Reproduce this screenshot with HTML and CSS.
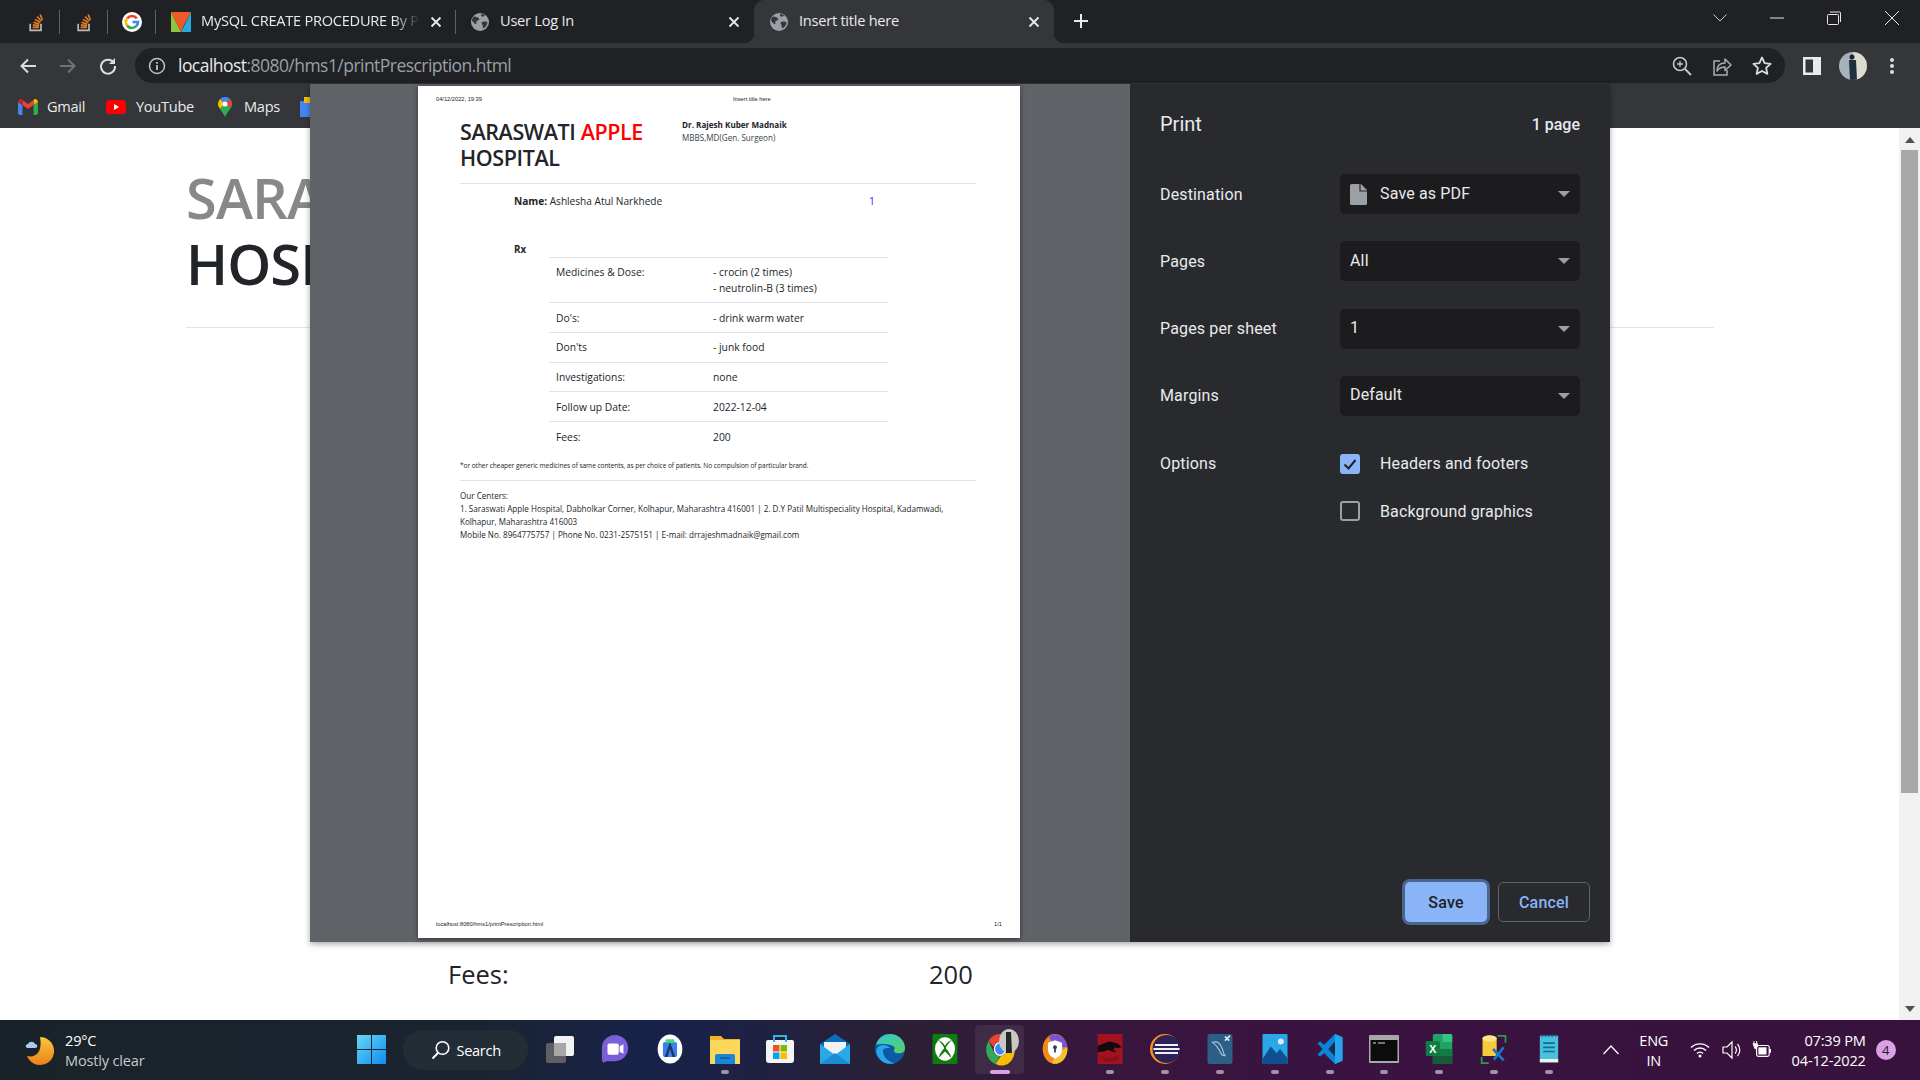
FILE: index.html
```html
<!DOCTYPE html>
<html lang="en">
<head>
<meta charset="utf-8">
<title>Insert title here</title>
<link rel="stylesheet" href="styles.css">
</head>
<body>
<svg class="defs" width="0" height="0" aria-hidden="true">
  <symbol id="so" viewBox="0 0 24 24"><path d="M5 14v8h13v-8" fill="none" stroke="#bcbbbb" stroke-width="2"/><path d="M8 18.500h7.500M8.200 15.500l7.400 1M9 12.300l7 2.500M10.800 8.800l6.200 4M13.500 5.300l4.600 5.700M17 3l2.700 6.800" fill="none" stroke="#e87a22" stroke-width="2"/></symbol>
  <symbol id="globe" viewBox="0 0 20 20"><circle cx="10" cy="10" r="9" fill="#9aa0a6"/><path d="M4 4.500c2 .3 4 .6 5 2s-1 2-2 2.500-1 1.500-.5 3c-2 .2-3.500-2-4.500-3.500C2 6.500 3 5.500 4 4.500zM12 10c2-1 4.500-.5 5.500.5-.5 3-2 5-4.500 6-.5-1.500 0-2.500-.5-3.500s-1.500-2-.5-3zM11 2c1.500 0 3 .5 4 1.500-1 1-2 1.500-3 1S11 3 11 2z" fill="#35363a"/></symbol>
  <symbol id="x" viewBox="0 0 12 12"><path d="M1.500 1.500l9 9M10.500 1.500l-9 9" stroke="#e8eaed" stroke-width="1.800" fill="none"/></symbol>
  <symbol id="caret" viewBox="0 0 12 6"><path d="M0 0h12L6 6z" fill="#9aa0a6"/></symbol>
</svg>

<header class="tabstrip">
  <div class="tab pin"><svg class="i20"><use href="#so"/></svg></div>
  <div class="tab pin"><svg class="i20"><use href="#so"/></svg></div>
  <div class="tab pin">
    <svg class="i20" viewBox="0 0 20 20"><circle cx="10" cy="10" r="10" fill="#fff"/><path d="M14.800 6.400A6 6 0 0 0 5.200 6.400" fill="none" stroke="#ea4335" stroke-width="2.600"/><path d="M5.200 6.400a6 6 0 0 0 0 7.200" fill="none" stroke="#fbbc05" stroke-width="2.600"/><path d="M5.200 13.600a6 6 0 0 0 9 .6" fill="none" stroke="#34a853" stroke-width="2.600"/><path d="M14.200 14.200A6 6 0 0 0 16 10h-5.500" fill="none" stroke="#4285f4" stroke-width="2.600"/></svg>
  </div>
  <div class="tab wide">
    <svg class="i20" viewBox="0 0 20 20"><path d="M0 0v20h10z" fill="#8cc63f"/><path d="M20 0v20H10z" fill="#27aae1"/><path d="M0 0h20l-7 13-3 7z" fill="#f05a28"/></svg>
    <span class="tab-title fade">MySQL CREATE PROCEDURE By P</span>
    <svg class="close"><use href="#x"/></svg>
  </div>
  <div class="tab wide second">
    <svg class="i20"><use href="#globe"/></svg>
    <span class="tab-title">User Log In</span>
    <svg class="close"><use href="#x"/></svg>
  </div>
  <div class="tab wide active">
    <svg class="i20"><use href="#globe"/></svg>
    <span class="tab-title">Insert title here</span>
    <svg class="close"><use href="#x"/></svg>
  </div>
  <svg class="newtab" viewBox="0 0 16 16"><path d="M8 1v14M1 8h14" stroke="#e8eaed" stroke-width="2"/></svg>
  <div class="winctl">
    <button class="wbtn"><svg class="i14" viewBox="0 0 14 14"><path d="M.5 3.500L7 10l6.500-6.500" fill="none" stroke="#c7c7c7" stroke-width="1"/></svg></button>
    <button class="wbtn"><svg class="i14" viewBox="0 0 14 14"><path d="M0 7h14" stroke="#e8e8e8" stroke-width="1"/></svg></button>
    <button class="wbtn"><svg class="i14" viewBox="0 0 14 14"><path d="M1.500 3.500h9a1 1 0 0 1 1 1v8a1 1 0 0 1-1 1h-9a1 1 0 0 1-1-1v-8a1 1 0 0 1 1-1zM3 1h9.500a1 1 0 0 1 1 1v9" fill="none" stroke="#e8e8e8"/></svg></button>
    <button class="wbtn wclose"><svg class="i14" viewBox="0 0 14 14"><path d="M0 0l14 14M14 0L0 14" stroke="#e8e8e8"/></svg></button>
  </div>
</header>

<nav class="toolbar">
  <button class="nav"><svg class="i18" viewBox="0 0 18 18"><path d="M17 9H3M9 2.500L2.500 9 9 15.500" fill="none" stroke="#dadce0" stroke-width="2"/></svg></button>
  <button class="nav"><svg class="i18" viewBox="0 0 18 18"><path d="M1 9h14M9 2.500L15.500 9 9 15.500" fill="none" stroke="#6f7276" stroke-width="2"/></svg></button>
  <button class="nav"><svg class="i18" viewBox="0 0 18 18"><path d="M15 6A7 7 0 1 0 16 9" fill="none" stroke="#dadce0" stroke-width="2"/><path d="M16 1v6h-6z" fill="#dadce0"/></svg></button>
  <div class="omnibox">
    <svg class="i18" viewBox="0 0 18 18"><circle cx="9" cy="9" r="7.500" fill="none" stroke="#bdc1c6" stroke-width="1.500"/><path d="M9 8v5M9 5v1.800" stroke="#bdc1c6" stroke-width="1.800"/></svg>
    <span class="url"><b>localhost</b>:8080/hms1/printPrescription.html</span>
    <span class="omni-actions">
      <svg class="i20" viewBox="0 0 20 20"><circle cx="8" cy="8" r="6.500" fill="none" stroke="#c4c7c9" stroke-width="1.600"/><path d="M13 13l6 6" stroke="#c4c7c9" stroke-width="2"/><path d="M8 5v6M5 8h6" stroke="#c4c7c9" stroke-width="1.300"/></svg>
      <svg class="i20" viewBox="0 0 20 20"><path d="M8 5H2v14h13v-5" fill="none" stroke="#a9acaf" stroke-width="1.500"/><path d="M5 15c0-6 4-8 8-8V3l6 6-6 5.500V11c-4 0-6 1-8 4z" fill="none" stroke="#a9acaf" stroke-width="1.500" stroke-linejoin="round"/></svg>
      <svg class="i20" viewBox="0 0 20 20"><path d="M10 1.500l2.600 5.600 6 .7-4.500 4.100 1.300 6L10 15l-5.400 2.900 1.300-6L1.400 7.800l6-.7z" fill="none" stroke="#dadce0" stroke-width="1.800" stroke-linejoin="round"/></svg>
    </span>
  </div>
  <svg class="panel" viewBox="0 0 18 18"><path d="M0 0h18v18H0zM2.500 2.500v13H10v-13z" fill="#e8eaed" fill-rule="evenodd"/></svg>
  <svg class="avatar" viewBox="0 0 28 28"><defs><clipPath id="av"><circle cx="14" cy="14" r="14"/></clipPath></defs><g clip-path="url(#av)"><path d="M0 0h14v28H0z" fill="#a5b1bd"/><path d="M14 0h14v28H14z" fill="#dcdccf"/><circle cx="13" cy="5" r="2.500" fill="#1d2429"/><path d="M10 8h7l1 20h-7z" fill="#20303d"/></g></svg>
  <svg class="dots" viewBox="0 0 14 18"><circle cx="7" cy="3" r="2" fill="#dadce0"/><circle cx="7" cy="9" r="2" fill="#dadce0"/><circle cx="7" cy="15" r="2" fill="#dadce0"/></svg>
</nav>

<nav class="bookmarks">
  <a class="bm bm-gmail"><svg class="i20" viewBox="0 0 20 16"><path d="M0 3v11a2 2 0 0 0 2 2h2.500V6z" fill="#4285f4"/><path d="M20 3v11a2 2 0 0 1-2 2h-2.500V6z" fill="#34a853"/><path d="M15.500 6V1l1-1C18 -.5 20 1 20 3l-4.500 3z" fill="#fbbc04"/><path d="M4.500 6L10 10l5.500-4V1L10 5 4.500 1z" fill="#ea4335"/><path d="M4.500 6V1l-1-1C2-.5 0 1 0 3z" fill="#c5221f"/></svg><span>Gmail</span></a>
  <a class="bm bm-yt"><svg class="i20" viewBox="0 0 20 14"><rect width="20" height="14" rx="3.500" fill="#f00"/><path d="M8 4l5 3-5 3z" fill="#fff"/></svg><span>YouTube</span></a>
  <a class="bm bm-maps"><svg class="pin-ico" viewBox="0 0 14 20"><path d="M7 20C5 15 0 11 0 7a7 7 0 0 1 14 0c0 4-5 8-7 13z" fill="#34a853"/><path d="M2 2.300A7 7 0 0 1 12 2L7 7z" fill="#4285f4"/><path d="M0 7a7 7 0 0 1 2-4.700L7 7l-5 4.500C1 10 0 8.500 0 7z" fill="#fbbc04"/><path d="M12 2a7 7 0 0 1 2 5c0 1-.4 2-1 3L7 7z" fill="#ea4335"/><circle cx="7" cy="7" r="2.500" fill="#fff"/></svg><span>Maps</span></a>
  <svg class="i20" viewBox="0 0 20 20"><rect y="4" width="20" height="16" fill="#4285f4"/><rect x="4" width="12" height="6" fill="#fbbc04"/></svg>
</nav>

<div class="viewport">
  <main class="page">
    <h1 class="hosp"><span class="hosp-gray">SARASWATI</span> <span class="hosp-red">APPLE</span><br>HOSPITAL</h1>
    <hr class="page-rule">
    <div class="fees-row"><span>Fees:</span><span>200</span></div>
  </main>
  <aside class="scrollbar">
    <svg class="sb-arrow" viewBox="0 0 10 6"><path d="M0 6h10L5 0z" fill="#505050"/></svg>
    <div class="sb-thumb"></div>
    <svg class="sb-arrow down" viewBox="0 0 10 6"><path d="M0 0h10L5 6z" fill="#505050"/></svg>
  </aside>
</div>

<footer class="taskbar">
  <div class="weather">
    <svg class="i28" viewBox="0 0 28 30"><defs><linearGradient id="moon" x1="0" y1="0" x2="0" y2="1"><stop offset="0" stop-color="#f8c83a"/><stop offset="1" stop-color="#ed7f1e"/></linearGradient></defs><path d="M15 2a14 14 0 1 1-13 19c8 2 16-3 13-19z" fill="url(#moon)"/><path d="M3 13c-3 0-3-4 0-4 1-3 6-3 7 0 3 0 3 4 0 4z" fill="#a9cdf2"/></svg>
    <div class="w-text"><span>29°C</span><span class="w-sub">Mostly clear</span></div>
  </div>
  <div class="tb-item">
    <svg class="winlogo" viewBox="0 0 29 29"><defs><linearGradient id="win" x1="0" y1="0" x2="1" y2="1"><stop offset="0" stop-color="#66d6f5"/><stop offset="1" stop-color="#0f8df0"/></linearGradient></defs><path d="M0 0h14v14H0zM15 0h14v14H15zM0 15h14v14H0zM15 15h14v14H15z" fill="url(#win)"/></svg>
  </div>
  <div class="searchpill">
    <svg class="i20" viewBox="0 0 20 20"><circle cx="11.500" cy="8" r="6.300" fill="none" stroke="#fff" stroke-width="1.600"/><path d="M7 13l-5.500 5.500" stroke="#fff" stroke-width="2"/></svg>
    <span>Search</span>
  </div>
  <div class="tb-item"><svg class="i30" viewBox="0 0 30 30"><rect x="9" y="2" width="20" height="20" rx="2" fill="#f2f2f2"/><rect x="1" y="9" width="20" height="20" rx="2" fill="#636363" opacity=".95"/><rect x="9" y="9" width="12" height="13" fill="#a8a8a8"/></svg></div>
  <div class="tb-item"><svg class="i30" viewBox="0 0 30 32"><path d="M15 1a14 14 0 0 1 0 28H1v-14A14 14 0 0 1 15 1z" fill="#7b5fd6"/><path d="M2 31l1-6 5 3z" fill="#7b5fd6"/><rect x="7" y="10" width="12" height="12" rx="2" fill="#fff"/><path d="M20 13l4-2v10l-4-2z" fill="#fff"/></svg></div>
  <div class="tb-item"><svg class="i30" viewBox="0 0 30 34"><ellipse cx="15" cy="17" rx="14" ry="16.500" fill="#fff"/><rect x="7" y="9" width="16" height="17" rx="2" fill="#3f7fe8"/><path d="M15 9l-6 17h3l3-9 3 9h3z" fill="#123a66"/><rect x="10" y="6" width="10" height="4" fill="#3ddc84"/></svg></div>
  <div class="tb-item run"><svg class="i30" viewBox="0 0 30 30"><path d="M0 2h11l3 3h16v25H0z" fill="#f0b429"/><path d="M0 6h30v24H0z" fill="#fbd75b"/><path d="M7 20h16a2 2 0 0 1 2 2v8H5v-8a2 2 0 0 1 2-2z" fill="#1b85d8"/><path d="M10 24h10" stroke="#0c5da0" stroke-width="1.500"/></svg></div>
  <div class="tb-item"><svg class="i30" viewBox="0 0 30 30"><path d="M3 6h24a2 2 0 0 1 2 2v18a3 3 0 0 1-3 3H4a3 3 0 0 1-3-3V8a2 2 0 0 1 2-2z" fill="#f4f4f4"/><path d="M9 8V2h12v6" fill="none" stroke="#2ab7e6" stroke-width="2"/><path d="M8 11h6.500v6.500H8z" fill="#f25022"/><path d="M15.500 11H22v6.500h-6.500z" fill="#7fba00"/><path d="M8 18.500h6.500V25H8z" fill="#00a4ef"/><path d="M15.500 18.500H22V25h-6.500z" fill="#ffb900"/></svg></div>
  <div class="tb-item"><svg class="i30" viewBox="0 0 30 30"><path d="M0 10L15 0l15 10v20H0z" fill="#0f6cbd"/><path d="M4 8h22v14H4z" fill="#f2f2f2"/><path d="M0 10l15 11 15-11v20H0z" fill="#29a9e8"/><path d="M0 30l15-11 15 11z" fill="#1b8cd4"/></svg></div>
  <div class="tb-item"><svg class="i30" viewBox="0 0 30 30"><defs><linearGradient id="edge" x1="0" y1="0" x2="1" y2="1"><stop offset="0" stop-color="#34c6d0"/><stop offset="1" stop-color="#56d364"/></linearGradient></defs><circle cx="15" cy="15" r="15" fill="#0c59a4"/><path d="M1 11C3 3 10 0 15 0c9 0 15 7 15 14 0 5-5 6-9 5-3-1-2-4-1-5-2-4-14-5-19-3z" fill="url(#edge)"/><path d="M8 17c0 6 5 11 12 12-8 3-17-2-19-12 1-4 4-6 7-6 5 0 7 3 7 3-4 0-7 0-7 3z" fill="#2aa5e6"/></svg></div>
  <div class="tb-item"><svg class="i30" viewBox="0 0 30 36"><rect width="30" height="36" rx="2" fill="#107c10"/><ellipse cx="15" cy="18" rx="12" ry="14" fill="#fff"/><path d="M6 7c4 1 7 4 9 7 2-3 5-6 9-7-4 3-7 7-8 10 3 3 6 8 7 12l-8-8-8 8c1-4 4-9 7-12-1-3-4-7-8-10z" fill="#107c10"/></svg></div>
  <div class="tb-item chrome-item">
    <svg class="i30 chrome" viewBox="0 0 30 34"><path d="M15 0a15 17 0 0 1 14 9H15a7 8 0 0 0-7 6L2 8A15 17 0 0 1 15 0z" fill="#ea4335"/><path d="M2 8l7 14a8 9 0 0 0 6 3l-5 9A15 17 0 0 1 2 8z" fill="#34a853"/><path d="M29 9a15 17 0 0 1-19 25l6-9c5 0 9-8 5-16z" fill="#fbbc04"/><ellipse cx="15" cy="17" rx="7" ry="8" fill="#fff"/><ellipse cx="15" cy="17" rx="5.500" ry="6.500" fill="#3f87f5"/></svg>
    <svg class="chrome-badge" viewBox="0 0 20 24"><ellipse cx="10" cy="12" rx="10" ry="12" fill="#c9c9c4"/><path d="M7 3h5l1 21H7z" fill="#23272b"/></svg>
  </div>
  <div class="tb-item"><svg class="i30" viewBox="0 0 28 34"><ellipse cx="14" cy="17" rx="14" ry="17" fill="#f28a1a"/><path d="M7 3A14 17 0 0 1 28 15H14z" fill="#7b52d6"/><path d="M28 15A14 17 0 0 1 10 33l8-12z" fill="#f2c230"/><path d="M14 7l8 3v8c0 5-4 8-8 10-4-2-8-5-8-10v-8z" fill="#fff"/><circle cx="14" cy="15" r="2.200" fill="#3a3a5a"/><path d="M13 16h2v5h-2z" fill="#3a3a5a"/></svg></div>
  <div class="tb-item run"><svg class="i30" viewBox="0 0 30 36"><rect width="30" height="36" fill="#a3121f"/><path d="M0 14c6-1 9-4 14-5l10 2 5 5-5 1-3-1-2 3 4 3-6-1-4-2-6 2-7 1z" fill="#120a0c"/><path d="M4 28c8 3 16 2 22-2M8 32c6 1 12 0 18-3" fill="none" stroke="#6a0b14"/></svg></div>
  <div class="tb-item run"><svg class="i30" viewBox="0 0 30 30"><circle cx="15" cy="15" r="15" fill="#f7941e"/><circle cx="16.500" cy="15" r="14" fill="#2c2255"/><path d="M5 11h23M3.500 15h26M5 19h23" stroke="#f0eef7" stroke-width="2"/></svg></div>
  <div class="tb-item run"><svg class="i30" viewBox="0 0 30 36"><rect width="30" height="36" rx="3" fill="#2d5f86"/><path d="M6 10c6-2 9 1 11 6 2 4 2 8 4 10-4 0-5-2-6-5-2-4-3-7-9-11z" fill="none" stroke="#a9c6dc" stroke-width="1.300"/><path d="M21 8l6-6M21 3l5 5" stroke="#dfe8ee" stroke-width="2"/></svg></div>
  <div class="tb-item run"><svg class="i30" viewBox="0 0 30 36"><rect width="30" height="36" rx="1" fill="#29a7e8"/><path d="M0 30L10 15l7 8 4-5 9 11v7H0z" fill="#0d4f91"/><circle cx="22" cy="9" r="3.500" fill="#d7f0fc"/></svg></div>
  <div class="tb-item run"><svg class="i30" viewBox="0 0 30 36"><path d="M21 0l9 4v28l-9 4L8 23l-5 4-3-2 6-7-6-7 3-2 5 4z" fill="#0a84d6"/><path d="M21 9l-8 9 8 9z" fill="#1f2a50"/><path d="M21 0l9 4v28l-9 4z" fill="#25a5ec"/></svg></div>
  <div class="tb-item run"><svg class="i30" viewBox="0 0 30 28"><rect width="30" height="28" rx="1" fill="#a8a8a8"/><rect x="1.500" y="5" width="27" height="21" fill="#0c0c0c"/><path d="M4 8h3M9 8h7" stroke="#ddd"/></svg></div>
  <div class="tb-item run"><svg class="i30" viewBox="0 0 30 34"><rect x="8" width="22" height="34" rx="2" fill="#21a366"/><path d="M19 0h9a2 2 0 0 1 2 2v7H19z" fill="#33c481"/><path d="M8 17h22v8H8z" fill="#107c41"/><path d="M8 25h22v7a2 2 0 0 1-2 2H8z" fill="#185c37"/><rect y="8" width="16" height="17" rx="1.500" fill="#107c41"/><text class="xl" x="8" y="21" text-anchor="middle">X</text></svg></div>
  <div class="tb-item run"><svg class="i30" viewBox="0 0 30 34"><path d="M2 5c0-4 16-4 16 0v20H2z" fill="#f6cb3c"/><ellipse cx="10" cy="5" rx="8" ry="3.500" fill="#ffe58a"/><path d="M19 2h9v8M1 26v7h8" fill="none" stroke="#2f9b45" stroke-width="2"/><path d="M14 17l12 13M26 15l-11 14" stroke="#1a78c8" stroke-width="3"/></svg></div>
  <div class="tb-item run"><svg class="i30 narrow" viewBox="0 0 22 36"><rect y="2" width="22" height="32" fill="#49c2e0"/><rect y="30" width="22" height="4" fill="#f1f1e4"/><path d="M3 1v3M7 1v3M11 1v3M15 1v3M19 1v3" stroke="#1f6d93" stroke-width="1.600"/><path d="M4 11h14M4 16h14M4 21h14" stroke="#186b8f" stroke-width="2"/></svg></div>
  <div class="tray">
    <svg class="tray-chev" viewBox="0 0 16 10"><path d="M.5 9L8 1l7.500 8" fill="none" stroke="#fff" stroke-width="1.200"/></svg>
    <div class="lang"><span>ENG</span><span>IN</span></div>
    <svg class="tray-ico" viewBox="0 0 20 16"><path d="M1 5.500a13 13 0 0 1 18 0M4 8.500a8.500 8.500 0 0 1 12 0M7 11.500a4 4 0 0 1 6 0" fill="none" stroke="#fff" stroke-width="1.400"/><circle cx="10" cy="14" r="1.500" fill="#fff"/></svg>
    <svg class="tray-ico" viewBox="0 0 20 18"><path d="M1 6h4l5-5v16l-5-5H1z" fill="none" stroke="#fff" stroke-width="1.200"/><path d="M13 5.500a5 5 0 0 1 0 7M15.500 3a9 9 0 0 1 0 12" fill="none" stroke="#fff" stroke-width="1.200"/></svg>
    <svg class="tray-ico" viewBox="0 0 22 20"><rect x="5" y="5" width="14" height="12" rx="2" fill="none" stroke="#fff" stroke-width="1.300"/><rect x="7" y="7" width="9" height="8" fill="#fff"/><path d="M19 9h2v4h-2z" fill="#fff"/><path d="M2 0v3M5 0v3M1 3h5v3L3.500 9z" stroke="#fff" fill="#fff"/></svg>
    <div class="clock"><span>07:39 PM</span><span>04-12-2022</span></div>
    <span class="notif">4</span>
  </div>
</footer>

<section class="print-dialog">
  <div class="preview">
    <article class="sheet">
      <div class="sheet-head"><span>04/12/2022, 19:39</span><span>Insert title here</span></div>
      <div class="letterhead">
        <h2 class="lh-title">SARASWATI <span class="hosp-red">APPLE</span> HOSPITAL</h2>
        <div class="lh-doc"><strong>Dr. Rajesh Kuber Madnaik</strong><span>MBBS,MD(Gen. Surgeon)</span></div>
      </div>
      <hr class="sheet-rule first">
      <div class="patient"><span class="p-name"><strong>Name:</strong> Ashlesha Atul Narkhede</span><span class="p-id">1</span></div>
      <div class="rx">Rx</div>
      <div class="presc">
        <div class="p-row tall"><span>Medicines &amp; Dose:</span><span>- crocin (2 times)<br>- neutrolin-B (3 times)</span></div>
        <div class="p-row"><span>Do's:</span><span>- drink warm water</span></div>
        <div class="p-row"><span>Don'ts</span><span>- junk food</span></div>
        <div class="p-row"><span>Investigations:</span><span>none</span></div>
        <div class="p-row"><span>Follow up Date:</span><span>2022-12-04</span></div>
        <div class="p-row"><span>Fees:</span><span>200</span></div>
      </div>
      <p class="footnote">*or other cheaper generic medicines of same contents, as per choice of patients. No compulsion of particular brand.</p>
      <hr class="sheet-rule second">
      <p class="centers">Our Centers:<br>1. Saraswati Apple Hospital, Dabholkar Corner, Kolhapur, Maharashtra 416001 | 2. D.Y Patil Multispeciality Hospital, Kadamwadi,<br>Kolhapur, Maharashtra 416003<br>Mobile No. 8964775757 | Phone No. 0231-2575151 | E-mail: drrajeshmadnaik@gmail.com</p>
      <div class="sheet-foot"><span>localhost:8080/hms1/printPrescription.html</span><span>1/1</span></div>
    </article>
  </div>
  <div class="sidebar">
    <div class="side-head"><span class="side-title">Print</span><span class="side-count">1 page</span></div>
    <div class="settings">
      <span class="lbl">Destination</span>
      <div class="select"><svg class="pdf" viewBox="0 0 17 21"><path d="M1.500 0H11l6 6v13.500a1.500 1.500 0 0 1-1.500 1.500h-14A1.500 1.500 0 0 1 0 19.500v-18A1.500 1.500 0 0 1 1.500 0z" fill="#9aa0a6"/><path d="M10 0v7h7" fill="none" stroke="#292a2d" stroke-width="1.200"/></svg><span>Save as PDF</span><svg class="caret"><use href="#caret"/></svg></div>
      <span class="lbl">Pages</span>
      <div class="select"><span>All</span><svg class="caret"><use href="#caret"/></svg></div>
      <span class="lbl">Pages per sheet</span>
      <div class="select"><span>1</span><svg class="caret"><use href="#caret"/></svg></div>
      <span class="lbl">Margins</span>
      <div class="select"><span>Default</span><svg class="caret"><use href="#caret"/></svg></div>
      <span class="lbl opt-lbl">Options</span>
      <div class="opts">
        <label class="opt"><span class="box on"><svg viewBox="0 0 20 20"><path d="M4.500 10.500l4 4 7-8.500" fill="none" stroke="#202124" stroke-width="2"/></svg></span>Headers and footers</label>
        <label class="opt"><span class="box"></span>Background graphics</label>
      </div>
    </div>
    <div class="actions"><button class="btn save">Save</button><button class="btn cancel">Cancel</button></div>
  </div>
</section>
</body>
</html>
```

FILE: styles.css
```css
* { box-sizing: border-box; }
html, body { margin: 0; height: 100%; }
body {
  position: relative; width: 1920px; height: 1080px; overflow: hidden;
  display: flex; flex-direction: column; background: #fff;
  font-family: "Open Sans", "Noto Sans", sans-serif;
}
svg { display: block; flex: none; overflow: visible; }
button { border: 0; background: none; padding: 0; font: inherit; }
.defs { position: absolute; }
.i14 { width: 14px; height: 14px; }
.i18 { width: 18px; height: 18px; }
.i20 { width: 20px; height: 20px; }
.i28 { width: 28px; height: 30px; }
.i30 { width: 30px; height: 30px; }
.narrow { width: 22px; height: 30px; }

/* tab strip */
.tabstrip { height: 43px; background: #202124; display: flex; align-items: center; padding-left: 12px; flex: none; position: relative; z-index: 0; }
.tab { height: 43px; display: flex; align-items: center; position: relative; color: #e8eaed; font-size: 14.6px; letter-spacing: -.25px; }
.tab::after { content: ""; position: absolute; right: 0; top: 10px; height: 24px; width: 1px; background: #5f6368; }
.pin { width: 48px; justify-content: center; }
.wide { width: 300px; padding-left: 15px; padding-right: 14px; gap: 10px; }
.second { width: 298px; padding-left: 14px; }
.tab-title { flex: 1; white-space: nowrap; overflow: hidden; padding-bottom: 3px; }
.fade { -webkit-mask-image: linear-gradient(90deg, #000 88%, transparent 100%); mask-image: linear-gradient(90deg, #000 88%, transparent 100%); }
.close { width: 12px; height: 12px; }
.second::after, .active::after { display: none; }
.active { background: #35363a; border-radius: 10px 10px 0 0; padding-left: 15px; }
.active::before { content: ""; position: absolute; left: -10px; right: -10px; bottom: 0; height: 10px; z-index: -1;
  background:
    radial-gradient(circle at 0 0, transparent 10px, #35363a 10.5px) 0 0 / 10px 10px no-repeat,
    radial-gradient(circle at 100% 0, transparent 10px, #35363a 10.5px) 100% 0 / 10px 10px no-repeat; }
.newtab { width: 16px; height: 16px; margin-left: 19px; margin-bottom: 1px; }
.winctl { margin-left: auto; display: flex; align-self: flex-start; height: 36px; }
.wbtn { width: 57px; height: 36px; display: flex; align-items: center; justify-content: center; padding-right: 2px; }
.wclose { padding-right: 0; }

/* toolbar */
.toolbar { height: 42px; padding: 3px 0 0 8px; background: #35363a; display: flex; align-items: center; flex: none; }
.nav { width: 40px; height: 36px; display: flex; align-items: center; justify-content: center; }
.omnibox { margin-left: 7px; width: 1650px; height: 35px; border-radius: 18px; background: #202124; display: flex; align-items: center; padding: 0 13px; gap: 12px; }
.url { color: #9aa0a6; font-size: 17.5px; letter-spacing: -.54px; white-space: nowrap; padding-bottom: 1px; }
.url b { color: #e8eaed; font-weight: 400; }
.omni-actions { margin-left: auto; display: flex; gap: 20px; }
.panel { width: 18px; height: 18px; margin-left: 18px; }
.avatar { width: 28px; height: 28px; margin-left: 18px; }
.dots { width: 14px; height: 18px; margin-left: 18px; }

/* bookmarks */
.bookmarks { height: 43px; background: #35363a; display: flex; align-items: center; padding-left: 18px; color: #e8eaed; font-size: 14.6px; letter-spacing: -.3px; flex: none; }
.bm { display: flex; align-items: center; gap: 9px; }
.bm span { padding-bottom: 1px; }
.bm-gmail { width: 88px; }
.bm-yt { width: 110px; gap: 10px; }
.bm-maps { width: 84px; padding-left: 2px; gap: 12px; }
.pin-ico { width: 14px; height: 20px; }

/* background page */
.viewport { flex: 1; display: flex; min-height: 0; }
.page { flex: 1; padding: 35.5px 0 0 186px; overflow: hidden; color: #212529; }
.hosp { margin: 0; font-size: 56px; line-height: 66px; font-weight: 600; letter-spacing: -.9px; white-space: nowrap; }
.hosp-gray { color: #888; }
.hosp-red { color: #f00; }
.page-rule { width: 1528px; margin: 31px 0 0; border: 0; border-top: 1px solid #e4e5e6; }
.fees-row { display: grid; grid-template-columns: 481px auto; margin: 628px 0 0 262px; font-size: 25.5px; line-height: 36px; }
.scrollbar { width: 21px; background: #f1f1f1; display: flex; flex-direction: column; align-items: center; padding-top: 9px; }
.sb-arrow { width: 10px; height: 6px; }
.sb-thumb { width: 17px; height: 643px; margin-top: 7px; background: #a8a8a8; }
.sb-arrow.down { margin-top: auto; margin-bottom: 8px; }

/* taskbar */
.taskbar { height: 60px; flex: none; display: flex; align-items: center; color: #fff;
  background: linear-gradient(90deg, #1a2229 0, #1a2430 25%, #17224a 34%, #2b2036 47%, #39163e 58%, #3a1340 70%, #37123c 100%); }
.weather { width: 344px; display: flex; align-items: center; padding-left: 25px; gap: 12px; }
.w-text { display: flex; flex-direction: column; font-size: 14.6px; line-height: 20px; letter-spacing: -.2px; }
.w-sub { color: #c9c9c9; }
.tb-item { width: 54.95px; height: 60px; display: flex; align-items: center; justify-content: center; position: relative; flex: none; padding-bottom: 2px; }
.winlogo { width: 29px; height: 29px; }
.searchpill { width: 125px; height: 40px; margin: 0 4.5px; border-radius: 20px; background: #232d36; display: flex; align-items: center; padding-left: 28px; gap: 5px; font-size: 14.6px; letter-spacing: -.3px; }
.run::after { content: ""; position: absolute; left: 50%; bottom: 6px; width: 8px; height: 4px; margin-left: -4px; border-radius: 2px; background: #9f94a3; }
.chrome-item::before { content: ""; position: absolute; left: 3px; right: 3px; top: 5px; bottom: 6px; border-radius: 4px; background: rgba(255,255,255,.07); }
.chrome-item::after { content: ""; position: absolute; left: 50%; bottom: 6px; width: 20px; height: 4px; margin-left: -10px; border-radius: 2px; background: #dca0e4; }
.chrome { position: relative; }
.chrome-badge { position: absolute; left: 27px; top: 9px; width: 20px; height: 24px; }
.tray { display: grid; grid-template-columns: 28px 58px 34px 30px 30px 89px 40px; align-items: center; justify-items: center; margin-left: 20px; height: 60px; }
.tray-chev { width: 16px; height: 10px; }
.lang { display: flex; flex-direction: column; align-items: center; font-size: 14.5px; line-height: 20px; letter-spacing: -.2px; padding-top: 2px; }
.tray-ico { width: 20px; height: 18px; }
.clock { justify-self: end; display: flex; flex-direction: column; align-items: flex-end; font-size: 14.6px; line-height: 20px; letter-spacing: -.2px; }
.notif { width: 20px; height: 20px; border-radius: 50%; background: #dca0e4; color: #202124; font-size: 13px; line-height: 20px; text-align: center; }

/* print dialog */
.print-dialog { position: absolute; left: 310px; top: 84px; width: 1300px; height: 858px; display: flex; box-shadow: 0 2px 6px rgba(0,0,0,.35); }
.preview { width: 820px; background: #5f6368; padding: 2px 0 0 108px; }
.sheet { width: 602px; height: 852px; background: #fff; box-shadow: 0 1px 5px rgba(0,0,0,.5); display: flex; flex-direction: column; color: #212529; }
.sheet-head { margin-top: 10px; padding-left: 18px; display: grid; grid-template-columns: 297px auto; font-family: "Liberation Sans", Arial, sans-serif; font-size: 5.7px; line-height: 6px; color: #222; }
.letterhead { margin: 17px 0 0 42px; display: flex; }
.lh-title { width: 222px; margin: 0; font-size: 21.5px; line-height: 26px; font-weight: 600; letter-spacing: -.4px; }
.lh-doc { display: flex; flex-direction: column; font-size: 8.1px; line-height: 13px; margin-top: -1.500px; height: 26px; color: #3a3f44; }
.lh-doc strong { color: #212529; font-weight: 700; }
.sheet-rule { width: 516px; margin: 0 0 0 42px; border: 0; border-top: 1px solid #e2e3e4; }
.sheet-rule.first { margin-top: 12px; }
.sheet-rule.second { margin-top: 9px; }
.patient { margin: 10px 0 0 96px; display: flex; font-size: 10.1px; line-height: 14px; }
.p-name { width: 356px; }
.p-id { color: #2a2af0; margin-left: -1px; }
.patient strong, .rx { font-weight: 700; }
.rx { margin: 35px 0 0 96px; font-size: 9.8px; line-height: 14px; height: 13.5px; }
.presc { margin-left: 131px; width: 339px; font-size: 10.3px; }
.p-row { display: grid; grid-template-columns: 157px auto; align-items: center; height: 29.75px; padding: .5px 0 0 7px; border-top: 1px solid #dee2e6; line-height: 16px; }
.p-row.tall { height: 45.5px; align-items: start; padding-top: 6px; }
.footnote { margin: 10px 0 0 42px; font-size: 6.55px; line-height: 10px; letter-spacing: -.05px; }
.centers { margin: 8.5px 0 0 42px; font-size: 8.1px; line-height: 13px; }
.sheet-foot { margin-top: auto; margin-bottom: 11px; padding: 0 18px; display: flex; justify-content: space-between; font-family: "Liberation Sans", Arial, sans-serif; font-size: 5.7px; line-height: 6px; color: #222; }

.sidebar { width: 480px; background: #292a2d; color: #e8eaed; display: flex; flex-direction: column; padding: 0 20px 20px 30px; font-family: Roboto, sans-serif; }
.side-head { height: 80px; padding: 26px 10px 0 0; display: flex; justify-content: space-between; align-items: flex-start; }
.side-title { font-size: 20px; line-height: 28px; }
.side-count { font-size: 16px; line-height: 30px; font-weight: 500; }
.settings { margin-top: 10px; display: grid; grid-template-columns: 180px 240px; row-gap: 27.33px; align-items: center; font-size: 16px; letter-spacing: .15px; }
.select { height: 40px; background: #1c1c1e; border-radius: 5px; display: flex; align-items: center; padding: 0 10px 2px; position: relative; }
.pdf { width: 17px; height: 21px; margin-right: 13px; margin-top: 2px; }
.caret { position: absolute; right: 10px; top: 17px; width: 12px; height: 6px; }
.opt-lbl { align-self: start; margin-top: 11px; }
.opts { display: flex; flex-direction: column; gap: 27.5px; margin-top: 10.67px; align-self: start; }
.opt { display: flex; align-items: center; gap: 20px; height: 20px; }
.box { width: 20px; height: 20px; border: 2px solid #9aa0a6; border-radius: 3px; }
.box.on { background: #8ab4f8; border: 0; }
.box svg { width: 20px; height: 20px; }
.actions { margin-top: auto; display: flex; justify-content: flex-end; gap: 11px; }
.btn { height: 40px; padding-top: 1px; border-radius: 5px; font-family: Roboto, sans-serif; font-size: 16px; font-weight: 500; letter-spacing: .2px; }
.save { width: 82px; background: #8ab4f8; color: #202124; box-shadow: 0 0 0 3px #4a668f; }
.cancel { width: 92px; border: 1px solid #5f6368; color: #8ab4f8; }
.xl { font: 700 12px "Liberation Sans", sans-serif; fill: #fff; }
```
